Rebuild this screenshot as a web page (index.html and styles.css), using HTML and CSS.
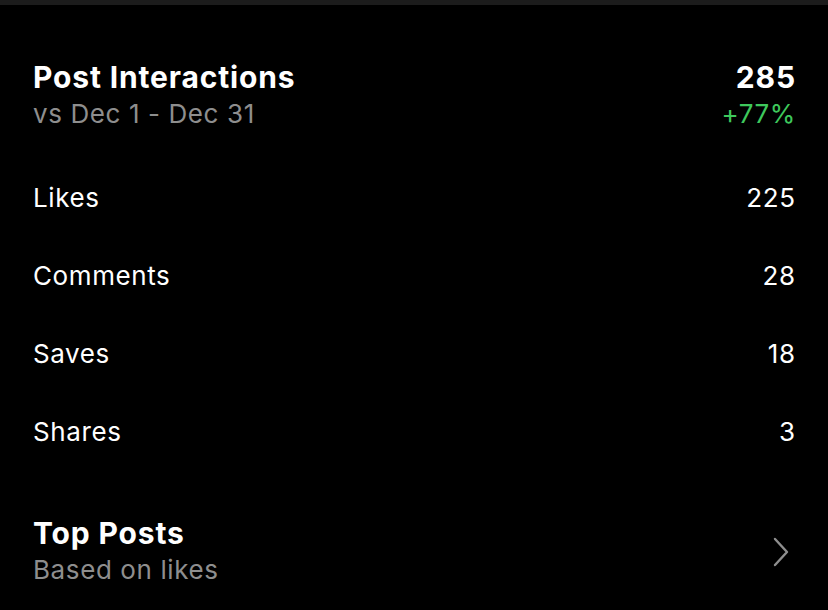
FILE: index.html
```html
<!DOCTYPE html>
<html lang="en">
<head>
    <meta charset="UTF-8">
    <meta name="viewport" content="width=device-width, initial-scale=1.0">
    <title>Post Interactions</title>
    <link rel="stylesheet" href="styles.css">
</head>
<body>
    <div class="topbar"></div>
    <div class="content">
        <div class="header">
            <div class="header-left">
                <div class="title">Post Interactions</div>
                <div class="subtitle">vs Dec 1 - Dec 31</div>
            </div>
            <div class="header-right">
                <div class="title">285</div>
                <div class="change">+77%</div>
            </div>
        </div>

        <div class="metrics">
            <div class="row"><span>Likes</span><span>225</span></div>
            <div class="row"><span>Comments</span><span>28</span></div>
            <div class="row"><span>Saves</span><span>18</span></div>
            <div class="row"><span>Shares</span><span>3</span></div>
        </div>

        <div class="top-posts">
            <div>
                <div class="title">Top Posts</div>
                <div class="subtitle">Based on likes</div>
            </div>
            <svg class="chevron" width="16" height="30" viewBox="0 0 16 30">
                <path d="M2 2 L14 15 L2 28" fill="none" stroke="#8e8e8e" stroke-width="2.4" stroke-linecap="round" stroke-linejoin="round"/>
            </svg>
        </div>
    </div>
</body>
</html>
```

FILE: styles.css
```css
body {
    margin: 0;
    background: #000;
    color: #fff;
    font-family: Inter, "Noto Sans", sans-serif;
}
.topbar {
    height: 5px;
    background: #1c1c1c;
}
.content {
    padding: 0 33px;
}
.header {
    display: flex;
    justify-content: space-between;
    margin-top: 54px;
}
.header-right {
    text-align: right;
    margin-right: -1px;
}
.title {
    font-size: 30px;
    font-weight: 700;
    line-height: 36px;
    letter-spacing: 0.85px;
}
.subtitle {
    font-size: 26px;
    line-height: 36px;
    letter-spacing: 0.6px;
    color: #8e8e8e;
    padding-top: 1px;
}
.change {
    font-size: 26px;
    line-height: 36px;
    letter-spacing: 0.6px;
    color: #3ec85c;
    padding-top: 1px;
}
.metrics {
    margin-top: 26px;
}
.row {
    display: flex;
    justify-content: space-between;
    align-items: center;
    height: 78px;
    font-size: 26px;
    letter-spacing: 0.6px;
    margin-right: -0.6px;
}
.top-posts {
    display: flex;
    justify-content: space-between;
    align-items: center;
    margin-top: 45px;
}
.chevron {
    margin-right: 6px;
}
```
